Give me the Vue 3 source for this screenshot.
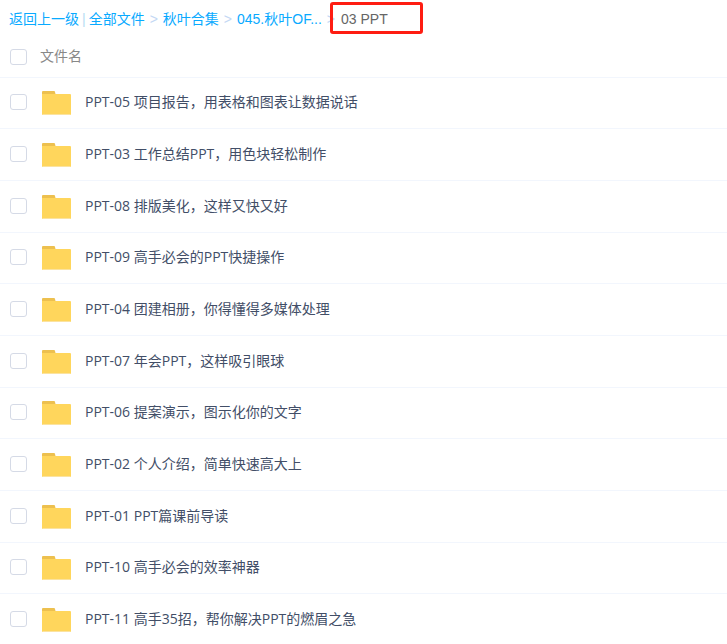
<script setup>
import { ref, computed } from 'vue'

const crumbs = ['全部文件', '秋叶合集', '045.秋叶OF...']
const files = [
  'PPT-05 项目报告，用表格和图表让数据说话',
  'PPT-03 工作总结PPT，用色块轻松制作',
  'PPT-08 排版美化，这样又快又好',
  'PPT-09 高手必会的PPT快捷操作',
  'PPT-04 团建相册，你得懂得多媒体处理',
  'PPT-07 年会PPT，这样吸引眼球',
  'PPT-06 提案演示，图示化你的文字',
  'PPT-02 个人介绍，简单快速高大上',
  'PPT-01 PPT篇课前导读',
  'PPT-10 高手必会的效率神器',
  'PPT-11 高手35招，帮你解决PPT的燃眉之急',
]
const selected = ref([])
const allSelected = computed({
  get: () => selected.value.length === files.length,
  set: (on) => { selected.value = on ? [...files] : [] },
})
</script>

<template>
  <main class="browser">
    <nav class="crumbs" aria-label="路径">
      <a href="#">返回上一级</a>
      <span class="bar">|</span>
      <template v-for="(crumb, i) in crumbs" :key="crumb">
        <span v-if="i" class="sep">&gt;</span>
        <a href="#">{{ crumb }}</a>
      </template>
      <span class="sep last">&gt;</span>
      <span class="current">03 PPT</span>
    </nav>

    <table class="files">
      <colgroup>
        <col class="col-pick">
        <col class="col-icon">
        <col>
      </colgroup>
      <thead>
        <tr>
          <th class="pick"><input v-model="allSelected" type="checkbox" aria-label="全选"></th>
          <th class="title" colspan="2">文件名</th>
        </tr>
      </thead>
      <tbody>
        <tr v-for="(file, i) in files" :key="file">
          <td class="pick"><input :id="'file-' + i" v-model="selected" type="checkbox" :value="file"></td>
          <td class="icon">
            <svg viewBox="0 0 30 26" width="30" height="26" aria-hidden="true">
              <path d="M0 6V2Q0 1 1 1H12Q13 1 13 2L14 6Z" fill="#edc04f" />
              <path d="M0 4H28Q29 4 29 5V24Q29 25 28 25H1Q0 25 0 24Z" fill="#ffd65c" />
              <path d="M1 24.5H28" stroke="#fbe3a0" />
            </svg>
          </td>
          <td class="name"><label :for="'file-' + i">{{ file }}</label></td>
        </tr>
      </tbody>
    </table>
  </main>
</template>

<style>
body {
  background: #fff;
  overflow: hidden;
}
</style>

<style scoped>
.browser {
  font: 14px/20px "Liberation Sans", "Noto Sans CJK SC", sans-serif;
}

.crumbs {
  display: flex;
  align-items: center;
  height: 36px;
  padding-left: 9px;
  line-height: 22px;
  white-space: nowrap;
}

.crumbs a,
.bar,
.sep {
  padding-top: 2px;
}

.crumbs a {
  color: #09aaff;
  text-decoration: none;
}

.bar {
  margin: 0 3px;
  color: #b5dcf3;
}

.sep {
  margin: 0 5px;
  color: #c4d8f4;
}

.last {
  margin-right: 0;
}

.current {
  box-sizing: border-box;
  width: 93px;
  height: 32px;
  margin-left: -5px;
  padding: 3px 8px;
  border: 3px solid #fe1d12;
  border-radius: 3px;
  color: #666;
}

.files {
  width: 100%;
  border-collapse: separate;
  border-spacing: 0;
  table-layout: fixed;
}

.col-pick {
  width: 40px;
}

.col-icon {
  width: 45px;
}

th,
td {
  box-sizing: border-box;
  padding: 0 0 2px;
  border-bottom: 1px solid #f2f6fd;
  text-align: left;
  vertical-align: middle;
}

th {
  height: 42px;
  font-weight: 400;
  color: #888;
}

td {
  height: 52px;
}

tr:nth-child(3n + 1) td {
  height: 51px;
}

th.pick {
  padding-bottom: 0;
}

.pick {
  padding-left: 10px;
}

.icon {
  padding: 0 0 0 2px;
}

.name {
  font-family: "Open Sans", "Noto Sans CJK SC", sans-serif;
  color: #424e67;
}

input {
  display: block;
  box-sizing: border-box;
  width: 17px;
  height: 16px;
  margin: 0;
  border: 1px solid #d5dae6;
  border-radius: 3px;
  appearance: none;
  background: #fff;
}

input:checked {
  background: #09aaff;
  border-color: #09aaff;
}

svg {
  display: block;
}
</style>
